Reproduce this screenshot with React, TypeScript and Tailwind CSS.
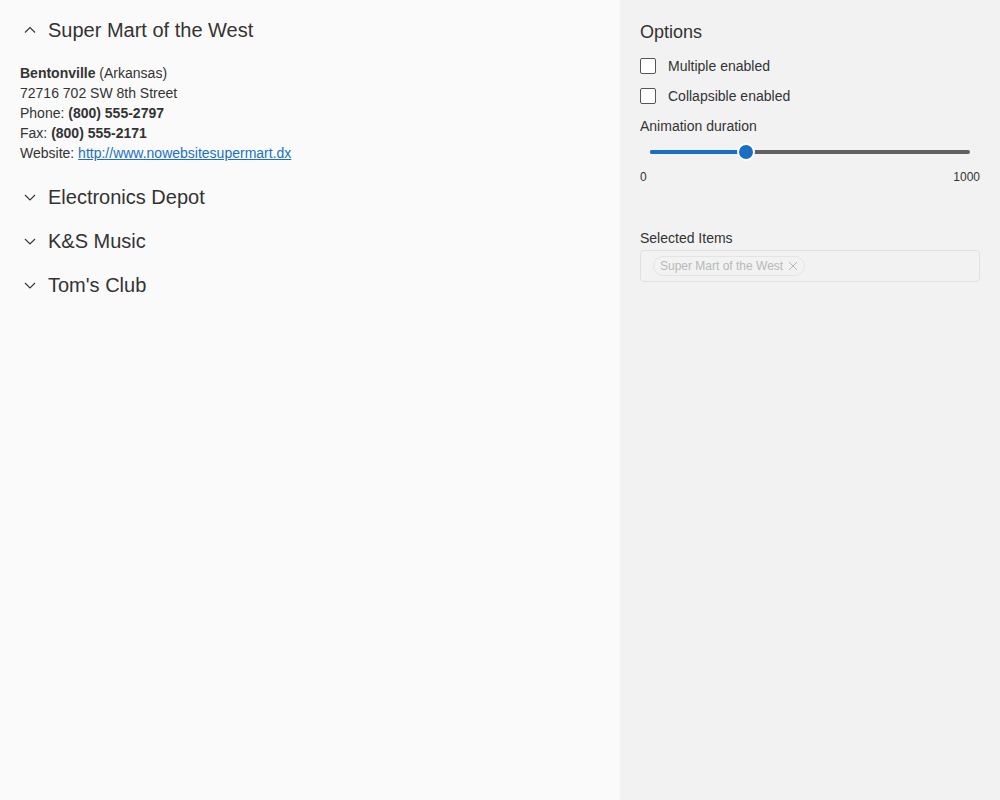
import React from "react";

const Chevron = ({ up }: { up?: boolean }) => (
  <svg width="14" height="14" viewBox="0 0 14 14" className="shrink-0">
    <path d={up ? "M2 9.5 L7 4.5 L12 9.5" : "M2 5 L7 10 L12 5"} fill="none" stroke="#333" strokeWidth="1.1" />
  </svg>
);

export default function App() {
  return (
    <div className="flex w-[1000px] h-[800px] text-[#333]" style={{ fontFamily: '"Liberation Sans", Arial, sans-serif' }}>
      <div className="w-[620px] bg-[#fafafa] pl-[20px] pr-5 pt-[17px]">
        <div className="flex items-center gap-[11px] pl-[3px] h-[26px]">
          <Chevron up />
          <span className="text-[20px]">Super Mart of the West</span>
        </div>
        <div className="mt-[20px] text-[14px] leading-[20px]">
          <div><b>Bentonville</b> (Arkansas)</div>
          <div>72716 702 SW 8th Street</div>
          <div>Phone: <b>(800) 555-2797</b></div>
          <div>Fax: <b>(800) 555-2171</b></div>
          <div>Website: <a className="text-[#1a6fc4] underline" href="#">http://www.nowebsitesupermart.dx</a></div>
        </div>
        <div className="mt-[21px] flex flex-col gap-[18px]">
          {["Electronics Depot", "K&S Music", "Tom's Club"].map((t) => (
            <div key={t} className="flex items-center gap-[11px] pl-[3px] h-[26px]">
              <Chevron />
              <span className="text-[20px]">{t}</span>
            </div>
          ))}
        </div>
      </div>
      <div className="w-[380px] bg-[#f2f2f2] px-5 pt-[20px]">
        <div className="text-[18px] leading-[24px]">Options</div>
        <div className="mt-[14px] flex items-center gap-3 h-[16px]">
          <div className="w-4 h-4 border border-[#555] rounded-[2px] bg-white" />
          <span className="text-[14px]">Multiple enabled</span>
        </div>
        <div className="mt-[14px] flex items-center gap-3 h-[16px]">
          <div className="w-4 h-4 border border-[#555] rounded-[2px] bg-white" />
          <span className="text-[14px]">Collapsible enabled</span>
        </div>
        <div className="mt-[13px] text-[14px] leading-[18px]">Animation duration</div>
        <div className="relative mt-[9px] h-[16px] mx-[10px]">
          <div className="absolute left-0 right-0 top-[6px] h-[4px] rounded-full bg-[#616161]" />
          <div className="absolute left-0 w-[96px] top-[6px] h-[4px] rounded-full bg-[#1a6fc4]" />
          <div className="absolute left-[87px] top-0 w-[18px] h-[18px] -mt-[1px] rounded-full bg-[#1a6fc4] border-2 border-white" />
        </div>
        <div className="mt-[8px] flex justify-between text-[12px] leading-[18px]">
          <span>0</span>
          <span>1000</span>
        </div>
        <div className="mt-[43px] text-[14px] leading-[18px]">Selected Items</div>
        <div className="mt-[3px] h-[32px] border border-[#e0e0e0] rounded-[4px] flex items-center px-[12px]">
          <div className="flex items-center gap-[5px] h-[20px] px-[6px] rounded-full border border-[#e4e4e4] text-[12px] text-[#b8b8b8]">
            <span>Super Mart of the West</span>
            <svg width="10" height="10" viewBox="0 0 10 10"><path d="M1 1 L9 9 M9 1 L1 9" stroke="#b8b8b8" strokeWidth="1" /></svg>
          </div>
        </div>
      </div>
    </div>
  );
}
